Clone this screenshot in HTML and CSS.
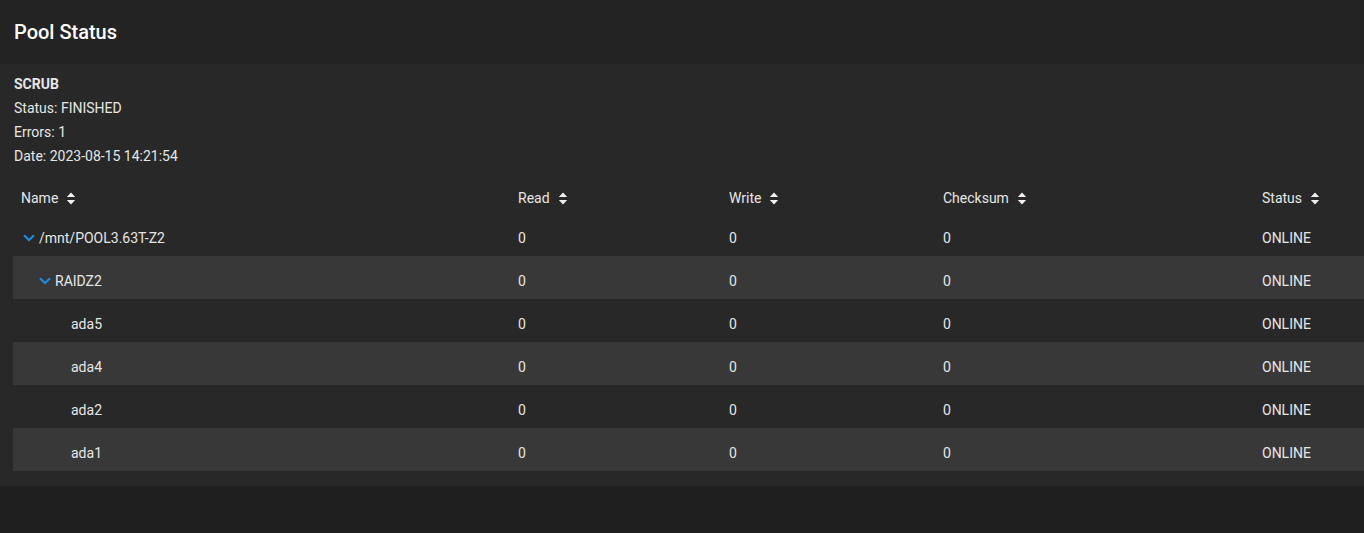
FILE: index.html
```html
<!DOCTYPE html>
<html lang="en">
<head>
<meta charset="utf-8">
<title>Pool Status</title>
<link rel="stylesheet" href="styles.css">
</head>
<body>
<div class="card">
  <div class="card-header">
    <h1 class="title">Pool Status</h1>
  </div>
  <div class="card-body">
    <div class="scrub">
      <div class="scrub-title">SCRUB</div>
      <div class="scrub-line">Status: FINISHED</div>
      <div class="scrub-line">Errors: 1</div>
      <div class="scrub-line">Date: 2023-08-15 14:21:54</div>
    </div>
    <div class="table">
      <div class="row head">
        <div class="cell">Name <svg class="sort" viewBox="0 0 10 14"><path d="M5 0.5 L9.5 5.5 H0.5 Z M5 13.5 L9.5 8.5 H0.5 Z"/></svg></div>
        <div class="cell">Read <svg class="sort" viewBox="0 0 10 14"><path d="M5 0.5 L9.5 5.5 H0.5 Z M5 13.5 L9.5 8.5 H0.5 Z"/></svg></div>
        <div class="cell">Write <svg class="sort" viewBox="0 0 10 14"><path d="M5 0.5 L9.5 5.5 H0.5 Z M5 13.5 L9.5 8.5 H0.5 Z"/></svg></div>
        <div class="cell">Checksum <svg class="sort" viewBox="0 0 10 14"><path d="M5 0.5 L9.5 5.5 H0.5 Z M5 13.5 L9.5 8.5 H0.5 Z"/></svg></div>
        <div class="cell">Status <svg class="sort" viewBox="0 0 10 14"><path d="M5 0.5 L9.5 5.5 H0.5 Z M5 13.5 L9.5 8.5 H0.5 Z"/></svg></div>
      </div>
      <div class="row">
        <div class="cell name lvl0"><svg class="chev" viewBox="0 0 12 8"><path d="M1 1.2 L6 6 L11 1.2"/></svg>/mnt/POOL3.63T-Z2</div>
        <div class="cell">0</div><div class="cell">0</div><div class="cell">0</div><div class="cell">ONLINE</div>
      </div>
      <div class="row odd">
        <div class="cell name lvl1"><svg class="chev" viewBox="0 0 12 8"><path d="M1 1.2 L6 6 L11 1.2"/></svg>RAIDZ2</div>
        <div class="cell">0</div><div class="cell">0</div><div class="cell">0</div><div class="cell">ONLINE</div>
      </div>
      <div class="row">
        <div class="cell name lvl2">ada5</div>
        <div class="cell">0</div><div class="cell">0</div><div class="cell">0</div><div class="cell">ONLINE</div>
      </div>
      <div class="row odd">
        <div class="cell name lvl2">ada4</div>
        <div class="cell">0</div><div class="cell">0</div><div class="cell">0</div><div class="cell">ONLINE</div>
      </div>
      <div class="row">
        <div class="cell name lvl2">ada2</div>
        <div class="cell">0</div><div class="cell">0</div><div class="cell">0</div><div class="cell">ONLINE</div>
      </div>
      <div class="row odd">
        <div class="cell name lvl2">ada1</div>
        <div class="cell">0</div><div class="cell">0</div><div class="cell">0</div><div class="cell">ONLINE</div>
      </div>
    </div>
  </div>
</div>
</body>
</html>
```

FILE: styles.css
```css
html, body {
  margin: 0;
  padding: 0;
  background: #1f1f1f;
  font-family: Roboto, "Liberation Sans", sans-serif;
  color: #e6e6e6;
}

.card {
  background: #282828;
  overflow: hidden;
  box-shadow: 0 2px 3px rgba(0,0,0,0.35);
}

.card-header {
  background: #232323;
  height: 64px;
  display: flex;
  align-items: center;
  padding: 0 14px;
}

.title {
  margin: 0;
  font-size: 20px;
  font-weight: 500;
  color: #ffffff;
  line-height: 24px;
}

.card-body {
  padding: 8px 0 15px 13px;
}

.scrub {
  padding-left: 1px;
  font-size: 14px;
  line-height: 24px;
}

.scrub-title {
  font-weight: 700;
}

.table {
  margin-top: 5px;
  font-size: 14px;
}

.row {
  display: grid;
  grid-template-columns: 497px 211px 214px 319px 1fr;
  height: 43px;
  padding-top: 6px;
  box-sizing: border-box;
  align-items: center;
}

.row.head {
  height: 40px;
  padding-top: 0;
  align-items: end;
  padding-bottom: 7px;
}

.row.odd {
  background: #383838;
}

.cell {
  padding-left: 8px;
  display: flex;
  align-items: center;
  white-space: nowrap;
}

.head .cell {
  color: #e6e6e6;
}

.sort {
  width: 10px;
  height: 13px;
  margin-left: 8px;
  fill: #f0f0f0;
}

.chev {
  width: 12px;
  height: 8px;
  margin-right: 4px;
  fill: none;
  stroke: #1a8fe3;
  stroke-width: 2;
}

.name.lvl0 { padding-left: 10px; }
.name.lvl1 { padding-left: 26px; }
.name.lvl2 { padding-left: 58px; }
```
